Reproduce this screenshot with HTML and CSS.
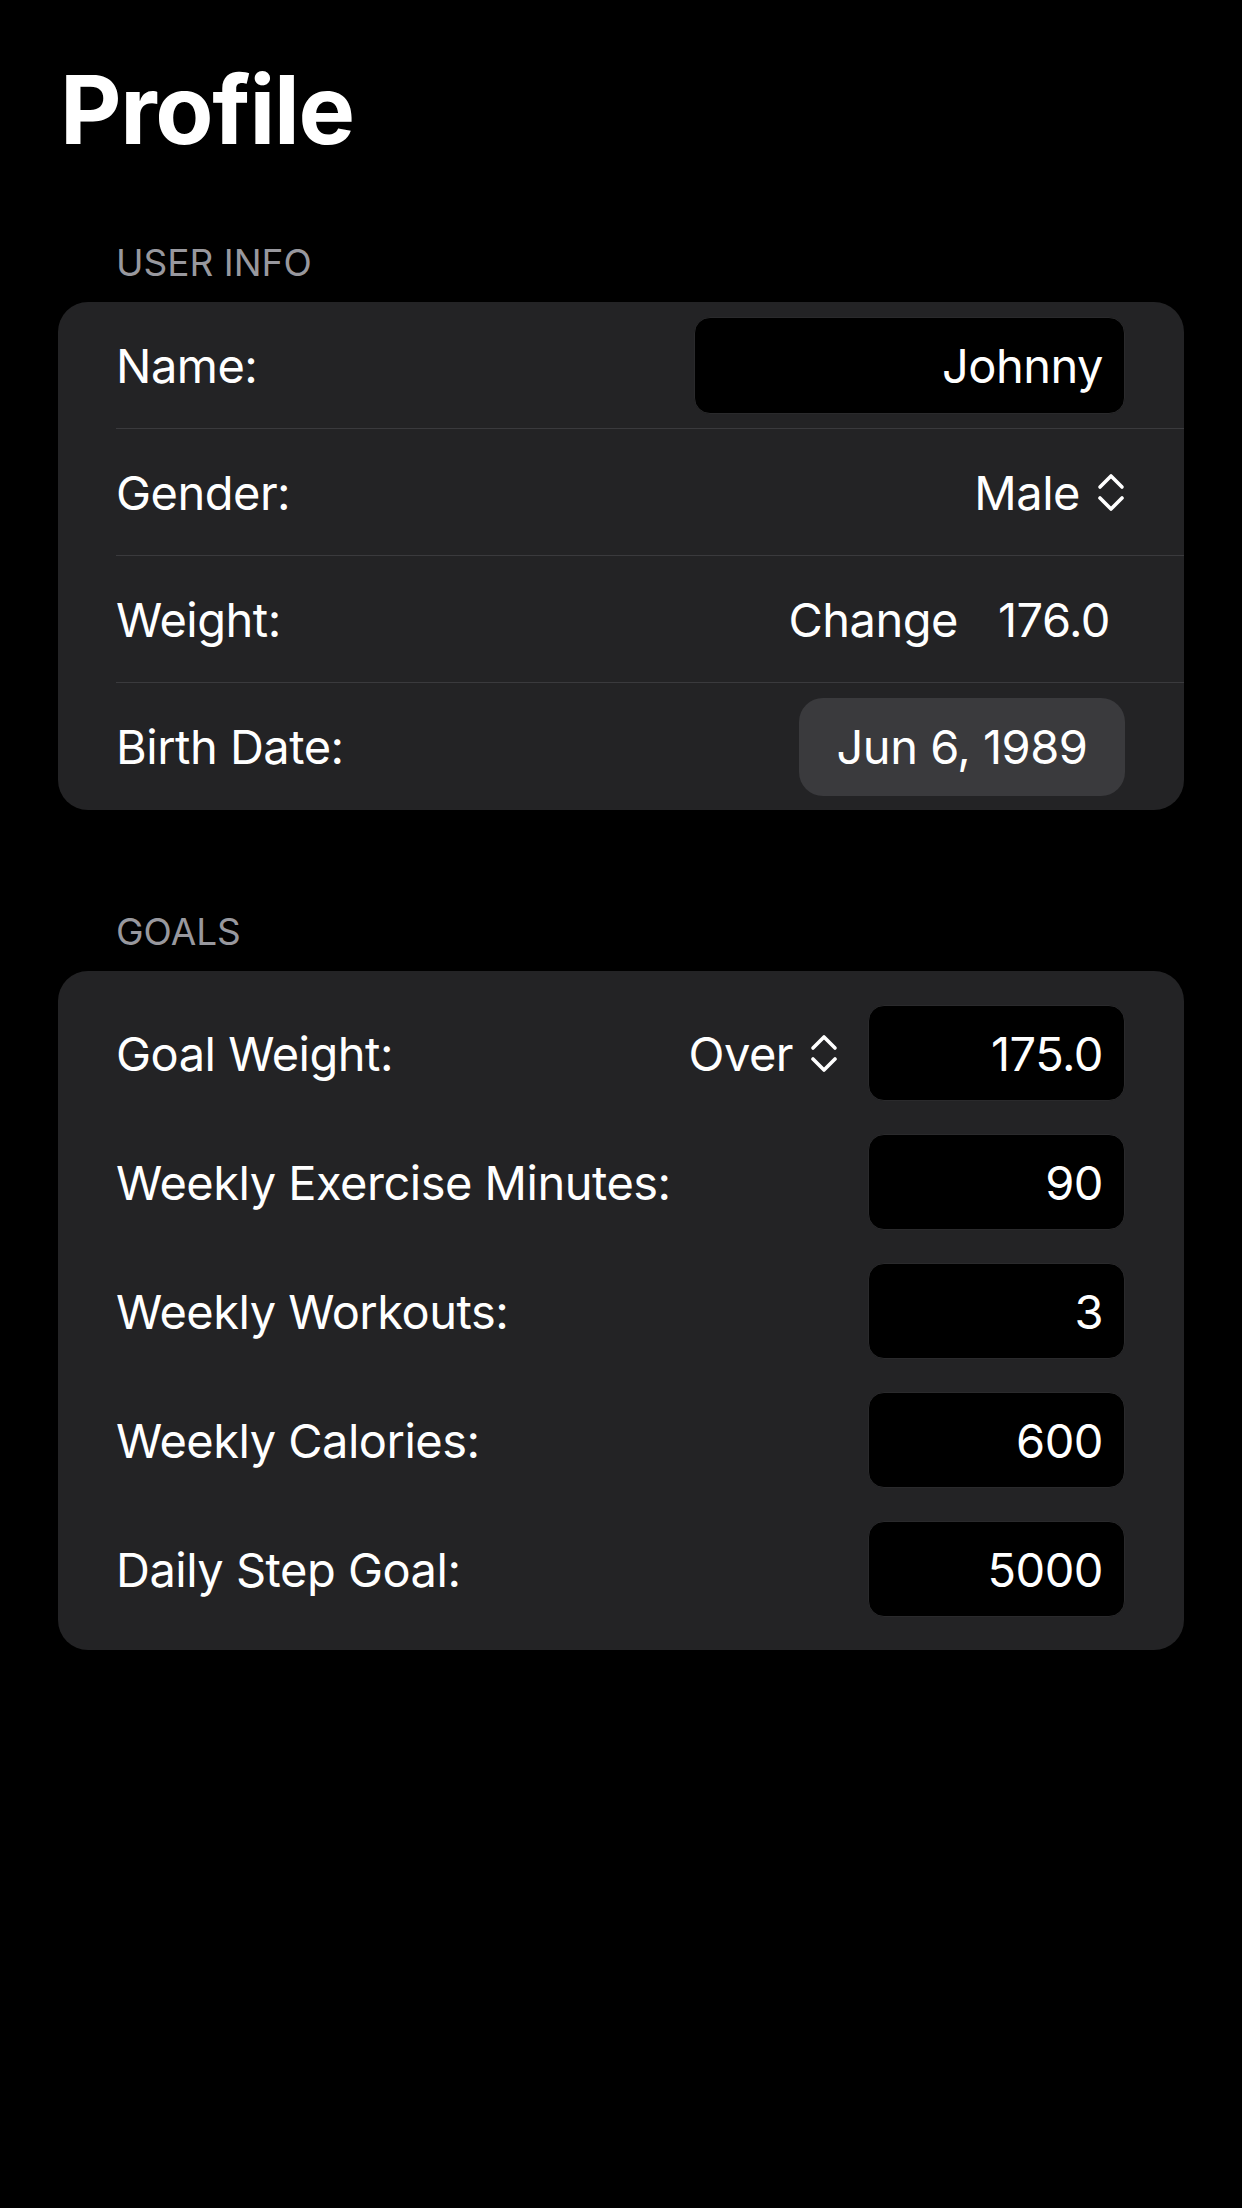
FILE: index.html
```html
<!DOCTYPE html>
<html lang="en">
<head>
    <meta charset="UTF-8">
    <meta name="viewport" content="width=device-width, initial-scale=1.0">
    <title>Profile</title>
    <link rel="stylesheet" href="styles.css">
</head>

<body>
    <div class="container">
        <h1 class="page-title">Profile</h1>

        <section class="section">
            <h2 class="section-header">User Info</h2>
            <div class="card">
                <div class="row row-divided">
                    <span class="label">Name:</span>
                    <span class="field field-wide">Johnny</span>
                </div>
                <div class="row row-divided">
                    <span class="label">Gender:</span>
                    <span class="picker">
                        Male
                        <svg class="chevrons" viewBox="0 0 28 38" width="28" height="38">
                            <polyline points="3,14 14,3 25,14" />
                            <polyline points="3,25 14,36 25,25" />
                        </svg>
                    </span>
                </div>
                <div class="row row-divided">
                    <span class="label">Weight:</span>
                    <span class="weight">
                        <span>Change</span>
                        <span>176.0</span>
                    </span>
                </div>
                <div class="row">
                    <span class="label">Birth Date:</span>
                    <span class="date-button">Jun 6, 1989</span>
                </div>
            </div>
        </section>

        <section class="section">
            <h2 class="section-header">Goals</h2>
            <div class="card card-goals">
                <div class="goal-row">
                    <span class="label">Goal Weight:</span>
                    <span class="goal-controls">
                        <span class="picker">
                            Over
                            <svg class="chevrons" viewBox="0 0 28 38" width="28" height="38">
                                <polyline points="3,14 14,3 25,14" />
                                <polyline points="3,25 14,36 25,25" />
                            </svg>
                        </span>
                        <span class="field">175.0</span>
                    </span>
                </div>
                <div class="goal-row">
                    <span class="label">Weekly Exercise Minutes:</span>
                    <span class="field">90</span>
                </div>
                <div class="goal-row">
                    <span class="label">Weekly Workouts:</span>
                    <span class="field">3</span>
                </div>
                <div class="goal-row">
                    <span class="label">Weekly Calories:</span>
                    <span class="field">600</span>
                </div>
                <div class="goal-row">
                    <span class="label">Daily Step Goal:</span>
                    <span class="field">5000</span>
                </div>
            </div>
        </section>
    </div>
</body>
</html>
```

FILE: styles.css
```css
:root {
    --bg-color: #000000;
    --card-color: #232325;
    --button-color: #3a3a3d;
    --divider-color: #3a3a3d;
    --muted-color: #98989e;
    --text-color: #ffffff;
    --card-radius: 30px;
    --field-radius: 16px;
}

* {
    box-sizing: border-box;
    margin: 0;
    padding: 0;
}

body {
    font-family: Inter, 'Noto Sans', sans-serif;
    background-color: var(--bg-color);
    color: var(--text-color);
    min-height: 100vh;
}

.container {
    padding: 0 58px;
}

.page-title {
    font-size: 95px;
    font-weight: 700;
    line-height: 1;
    letter-spacing: -1.3px;
    padding-top: 62px;
    padding-left: 2px;
}

.section {
    margin-top: 87px;
}

.section + .section {
    margin-top: 103px;
}

.section-header {
    font-size: 37px;
    font-weight: 400;
    line-height: 1;
    text-transform: uppercase;
    color: var(--muted-color);
    padding-left: 58px;
    margin-bottom: 21px;
}

.card {
    background-color: var(--card-color);
    border-radius: var(--card-radius);
    overflow: hidden;
}

.label,
.field,
.picker,
.weight,
.date-button {
    font-size: 47px;
    letter-spacing: -0.5px;
}

.label {
    white-space: nowrap;
}

.row {
    display: flex;
    align-items: center;
    justify-content: space-between;
    height: 127px;
    margin-left: 58px;
    padding-right: 59px;
}

.row-divided {
    border-bottom: 1px solid var(--divider-color);
}

.field {
    display: flex;
    align-items: center;
    justify-content: flex-end;
    width: 257px;
    height: 96px;
    padding-right: 21px;
    background-color: #000000;
    border: 1px solid #2a2a2c;
    border-radius: var(--field-radius);
}

.field-wide {
    width: 431px;
    height: 97px;
}

.picker {
    display: flex;
    align-items: center;
    gap: 17px;
}

.chevrons {
    fill: none;
    stroke: var(--text-color);
    stroke-width: 3.6;
    stroke-linecap: round;
    stroke-linejoin: round;
}

.weight {
    display: flex;
    gap: 40px;
    padding-right: 15px;
}

.date-button {
    display: flex;
    align-items: center;
    justify-content: center;
    width: 326px;
    height: 98px;
    background-color: var(--button-color);
    border-radius: 24px;
}

.card-goals {
    display: flex;
    flex-direction: column;
    gap: 33px;
    padding: 34px 59px 33px 58px;
}

.goal-row {
    display: flex;
    align-items: center;
    justify-content: space-between;
}

.goal-controls {
    display: flex;
    align-items: center;
    gap: 30px;
}
```
